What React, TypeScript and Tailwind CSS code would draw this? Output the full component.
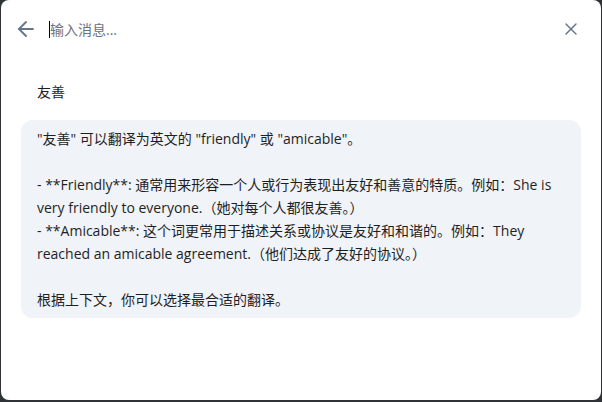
import { ArrowLeft, X } from "lucide-react";

const answerLines = [
  "\"友善\" 可以翻译为英文的 \"friendly\" 或 \"amicable\"。",
  "",
  "- **Friendly**: 通常用来形容一个人或行为表现出友好和善意的特质。例如：She is",
  "very friendly to everyone.（她对每个人都很友善。）",
  "- **Amicable**: 这个词更常用于描述关系或协议是友好和和谐的。例如：They",
  "reached an amicable agreement.（他们达成了友好的协议。）",
  "",
  "根据上下文，你可以选择最合适的翻译。",
];

export default function App() {
  return (
    <div
      className="w-[602px] h-[402px] bg-[#2f3237] overflow-hidden"
      style={{ fontFamily: '"Open Sans", "Noto Sans CJK SC", sans-serif' }}
    >
      <div className="ml-px w-[600px] h-[400px] bg-white rounded-[8px] flex flex-col">
        {/* header */}
        <div className="h-[58px] flex items-center pl-[13px] pr-[20px]">
          <button className="text-[#64748b] w-6 h-6 flex items-center justify-center">
            <ArrowLeft size={24} strokeWidth={1.8} />
          </button>
          <div className="ml-[11px] flex-1 flex items-center">
            <span className="w-px h-[17px] bg-black" />
            <input
              className="flex-1 outline-none text-[14px] text-[#222] placeholder:text-[#6b7280] bg-transparent"
              placeholder="输入消息..."
            />
          </div>
          <button className="text-[#64748b] w-5 h-5 flex items-center justify-center">
            <X size={20} strokeWidth={1.7} />
          </button>
        </div>

        {/* question */}
        <div className="mt-[22px] pl-9 text-[14px] leading-[23px] text-[#1f1f1f]">友善</div>

        {/* answer bubble */}
        <div className="mt-[17px] mx-5 bg-[#f0f3f8] rounded-[12px] px-4 py-[7px] text-[14px] leading-[23px] text-[#1f1f1f]">
          {answerLines.map((line, i) => (
            <div key={i} className="whitespace-pre h-[23px]">
              {line}
            </div>
          ))}
        </div>
      </div>
    </div>
  );
}
